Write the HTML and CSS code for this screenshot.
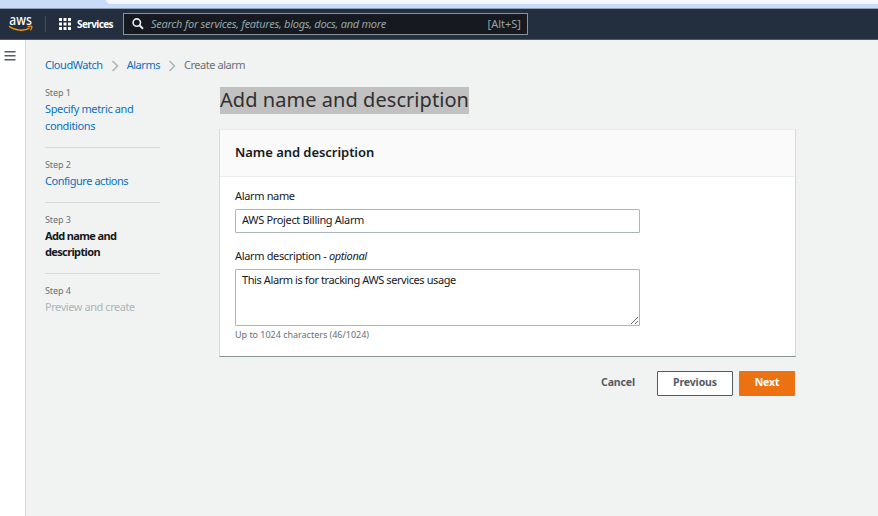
FILE: index.html
```html
<!DOCTYPE html>
<html lang="en">
<head>
<meta charset="utf-8">
<title>Create alarm</title>
<link rel="stylesheet" href="styles.css">
</head>
<body>
<div class="browser-strip"><div class="browser-toolbar"></div></div>
<header class="topnav">
  <svg class="logo" width="26" height="18" viewBox="0 0 26 18">
    <text x="0.300" y="9.500" textLength="22.500" lengthAdjust="spacingAndGlyphs">aws</text>
    <path d="M0 11.300C6 16 15 16.200 20.500 13.200" fill="none" stroke="#f90" stroke-width="1.4"/>
    <path d="M18.500 11.700c2-.8 4.200-.8 4.400-.2.2.8-.3 2.500-1.500 3.800" fill="none" stroke="#f90" stroke-width="1.2"/>
  </svg>
  <span class="divider"></span>
  <svg class="grid-icon" width="12" height="12" viewBox="0 0 12 12" fill="#fff">
    <path d="M0 0h3v3H0zM4.500 0h3v3h-3zM9 0h3v3H9zM0 4.500h3v3H0zM4.500 4.500h3v3h-3zM9 4.500h3v3H9zM0 9h3v3H0zM4.500 9h3v3h-3zM9 9h3v3H9z"/>
  </svg>
  <span class="services">Services</span>
  <div class="search">
    <svg width="12" height="12" viewBox="0 0 12 12" fill="none" stroke="#eaeded" stroke-width="1.6">
      <circle cx="4.800" cy="4.600" r="3.700"/><path d="M7.500 7.300l3.500 3.500" stroke-width="2"/>
    </svg>
    <span class="search-hint">Search for services, features, blogs, docs, and more</span>
    <span class="shortcut">[Alt+S]</span>
  </div>
</header>
<div class="shell">
  <aside class="rail">
    <svg width="12" height="10" viewBox="0 0 12 10" fill="#545b64"><path d="M.5 0h11v1.500H.5zM.5 4h11v1.500H.5zM.5 8h11v1.500H.5z"/></svg>
  </aside>
  <main class="content">
    <nav class="breadcrumbs">
      <a>CloudWatch</a>
      <svg width="8" height="12" viewBox="0 0 8 12"><path d="M1.500 1l5 5-5 5"/></svg>
      <a>Alarms</a>
      <svg width="8" height="12" viewBox="0 0 8 12"><path d="M1.500 1l5 5-5 5"/></svg>
      <span>Create alarm</span>
    </nav>
    <div class="wizard">
      <ol class="steps">
        <li><small>Step 1</small><a>Specify metric and<br>conditions</a></li>
        <li><small>Step 2</small><a>Configure actions</a></li>
        <li class="current"><small>Step 3</small><b>Add name and<br>description</b></li>
        <li class="disabled"><small>Step 4</small><span>Preview and create</span></li>
      </ol>
      <section class="form">
        <h1><span>Add name and description</span></h1>
        <div class="card">
          <h2>Name and description</h2>
          <div class="fields">
            <label for="name">Alarm name</label>
            <input id="name" type="text" value="AWS Project Billing Alarm">
            <label for="desc">Alarm description - <i>optional</i></label>
            <textarea id="desc" spellcheck="false">This Alarm is for tracking AWS services usage</textarea>
            <p class="hint">Up to 1024 characters (46/1024)</p>
          </div>
        </div>
        <div class="actions">
          <button class="cancel">Cancel</button>
          <button class="previous">Previous</button>
          <button class="next">Next</button>
        </div>
      </section>
    </div>
  </main>
</div>
</body>
</html>
```
FILE: styles.css
```css
* { box-sizing: border-box; }
body {
  margin: 0;
  height: 516px;
  overflow: hidden;
  background: #f1f3f3;
  color: #16191f;
  font: 11px/16px "Noto Sans", "Open Sans", sans-serif;
  letter-spacing: -0.37px;
  white-space: nowrap;
}
.browser-strip { height: 9px; background: #c9dcf7; border-bottom: 1px solid #8f9fb8; }
.browser-toolbar { height: 4px; margin-left: 106px; background: #f4f7fd; border-bottom-left-radius: 5px 4px; }
.topnav {
  display: flex;
  align-items: center;
  height: 31px;
  padding-left: 9px;
  background: #232f3e;
  border-bottom: 1px solid #515b68;
}
.logo { overflow: visible; fill: #fff; font: 500 13.500px "Noto Sans", sans-serif; letter-spacing: 0; }
.divider { width: 1px; height: 16px; margin: 0 13px 0 10px; background: #424d5b; }
.services { width: 46px; margin-left: 6px; color: #fff; font-size: 10px; font-weight: 700; letter-spacing: -0.95px; letter-spacing: -0.95px; }
.services { letter-spacing: -0.6px; }
.search {
  display: flex;
  align-items: center;
  width: 405px;
  height: 22px;
  padding: 0 6px 0 8px;
  border: 1px solid #879596;
  background: #16191f;
  color: #95a5a6;
}
.search-hint { margin-left: 7px; font-style: italic; letter-spacing: -0.27px; }
.shortcut { margin-left: auto; letter-spacing: 0; }
.shell { display: flex; height: 476px; }
.rail { width: 26px; padding: 11px 4px; background: #fff; border-right: 1px solid #d5dbdb; }
.rail svg { display: block; }
.content { padding: 17px 0 0 19px; }
a { color: #0b6fc0; }
.breadcrumbs { display: flex; align-items: center; height: 16px; letter-spacing: -0.46px; }
.breadcrumbs svg { margin: 1px 8px 0; fill: none; stroke: #aab7b8; stroke-width: 1.6; }
.breadcrumbs span { color: #687078; }
.wizard { display: flex; }
.steps { width: 115px; margin: 12px 59px 0 0; padding: 0; list-style: none; }
.steps li { padding-bottom: 13px; margin-bottom: 9px; border-bottom: 1px solid #d5dbdb; line-height: 17px; }
.steps li:last-child { border: 0; }
.steps small { display: block; height: 15px; color: #687078; font-size: 9px; line-height: 16px; letter-spacing: -0.1px; }
.steps .current { line-height: 16px; letter-spacing: -0.64px; }
.steps .current small { height: 16px; }
.steps .disabled { letter-spacing: -0.43px; }
.steps li:nth-child(2) { letter-spacing: -0.46px; }
.disabled span { color: #aab7b8; }
.form { width: 577px; }
h1 { height: 27px; margin: 14px 0 15px 1px; font-size: 20px; font-weight: 400; line-height: 26px; letter-spacing: 0.05px; }
h1 span { display: block; width: 249px; height: 27px; background: #c1c1c1; color: #303030; }
.card {
  height: 228px;
  border: 1px solid #d5dbdb;
  border-top-color: #eaeded;
  border-bottom-color: #879596;
  background: #fff;
}
h2 { height: 47px; margin: 0; padding: 0 15px; background: #fafafa; border-bottom: 1px solid #eaeded; font-size: 13px; font-weight: 600; line-height: 44px; letter-spacing: -0.05px; }
.fields { padding: 11px 15px; }
label { display: block; height: 16px; letter-spacing: -0.35px; }
input, textarea {
  display: block;
  width: 405px;
  margin: 0;
  border: 1px solid #aab7b8;
  border-radius: 1px;
  background: #fff;
  color: #16191f;
  font: inherit;
  letter-spacing: -0.33px;
}
input { height: 24px; margin: 5px 0 15px; padding: 0 6px 3px; }
textarea { height: 57px; margin-top: 5px; padding: 2px 6px; overflow: hidden; letter-spacing: -0.41px; }
.hint { margin: 1px 0 0; color: #687078; font-size: 9px; letter-spacing: -0.02px; }
.actions { display: flex; margin: 14px 1px 0 0; justify-content: flex-end; }
button { height: 25px; padding: 0 0 3px; border: 0; border-radius: 1px; background: transparent; color: #545b64; font: 700 10.500px/16px "Noto Sans", sans-serif; letter-spacing: -0.12px; }
.cancel { width: 78px; }
.previous { width: 76px; margin-right: 6px; border: 1px solid #545b64; background: #fff; }
.next { width: 56px; background: #ec7211; color: #fff; }
```
